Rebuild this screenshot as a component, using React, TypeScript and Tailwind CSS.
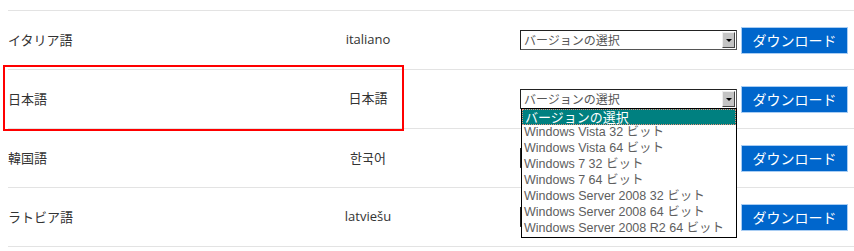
import React from 'react';

const rows = [
  { label: 'イタリア語', native: 'italiano', lang: 'it' },
  { label: '日本語', native: '日本語', lang: 'ja', open: true },
  { label: '韓国語', native: '한국어', lang: 'ko' },
  { label: 'ラトビア語', native: 'latviešu', lang: 'lv' },
];

const options = [
  'バージョンの選択',
  'Windows Vista 32 ビット',
  'Windows Vista 64 ビット',
  'Windows 7 32 ビット',
  'Windows 7 64 ビット',
  'Windows Server 2008 32 ビット',
  'Windows Server 2008 64 ビット',
  'Windows Server 2008 R2 64 ビット',
];

const jp = "font-['Noto_Sans_CJK_JP',sans-serif]";

function VersionSelect({ open }: { open?: boolean }) {
  return (
    <div className="relative w-[217px]">
      <div className="flex h-[20px] items-stretch border border-[#222] border-b-[#555] border-r-[#555] bg-white">
        <span className={`flex-1 pl-[3px] text-[12px] leading-[18px] text-[#555] ${jp}`}>
          バージョンの選択
        </span>
        <span className="m-[1px] flex w-[13px] items-center justify-center border border-[#eee] border-b-[#444] border-r-[#444] bg-[#c4c4c4]">
          <svg width="6" height="3" viewBox="0 0 6 3">
            <path d="M0 0h6L3 3z" fill="#000" />
          </svg>
        </span>
      </div>
      {open && (
        <ul className="absolute left-[1px] top-[19px] z-10 w-[216px] border border-black bg-white">
          {options.map((opt, i) => (
            <li
              key={opt}
              className={`h-[16px] whitespace-nowrap pl-[2px] text-[12.5px] leading-[15px] font-['Liberation_Sans','Noto_Sans_CJK_JP',sans-serif] ${
                i === 0
                  ? 'border border-dotted border-[#e8907c] bg-[#008080] text-white leading-[13px] pl-[1px] text-[13px]'
                  : 'text-[#5e5e5e]'
              }`}
            >
              {opt}
            </li>
          ))}
        </ul>
      )}
    </div>
  );
}

export default function App() {
  return (
    <div className="relative h-[251px] w-[854px] overflow-hidden bg-white pl-[8px]">
      <div className="h-[10px]" />
      {rows.map((row) => (
        <div
          key={row.lang}
          className="flex h-[59px] items-center border-t border-[#e3e3e3] text-[13px] text-[#333]"
        >
          <div className={`w-[290px] ${jp}`}>{row.label}</div>
          <div
            className={`w-[140px] text-center ${
              row.lang === 'ko'
                ? "font-['Noto_Sans_CJK_KR',sans-serif]"
                : "font-['Open_Sans','Noto_Sans_CJK_JP',sans-serif]"
            }`}
          >
            {row.native}
          </div>
          <div className="flex items-center gap-[4px] pl-[82px]">
            <VersionSelect open={row.open} />
            <button className="h-[27px] w-[107px] border border-[#a9cdf3] bg-[#0066cc] p-0">
              <span className={`block h-full border border-[#0066cc] text-[14px] leading-[23px] text-white ${jp}`}>
                ダウンロード
              </span>
            </button>
          </div>
        </div>
      ))}
      <div className="border-t border-[#e3e3e3]" />

      {/* red highlight box */}
      <div className="pointer-events-none absolute left-[3px] top-[65px] h-[66px] w-[401px] border-2 border-[#ff0000]" />
    </div>
  );
}
